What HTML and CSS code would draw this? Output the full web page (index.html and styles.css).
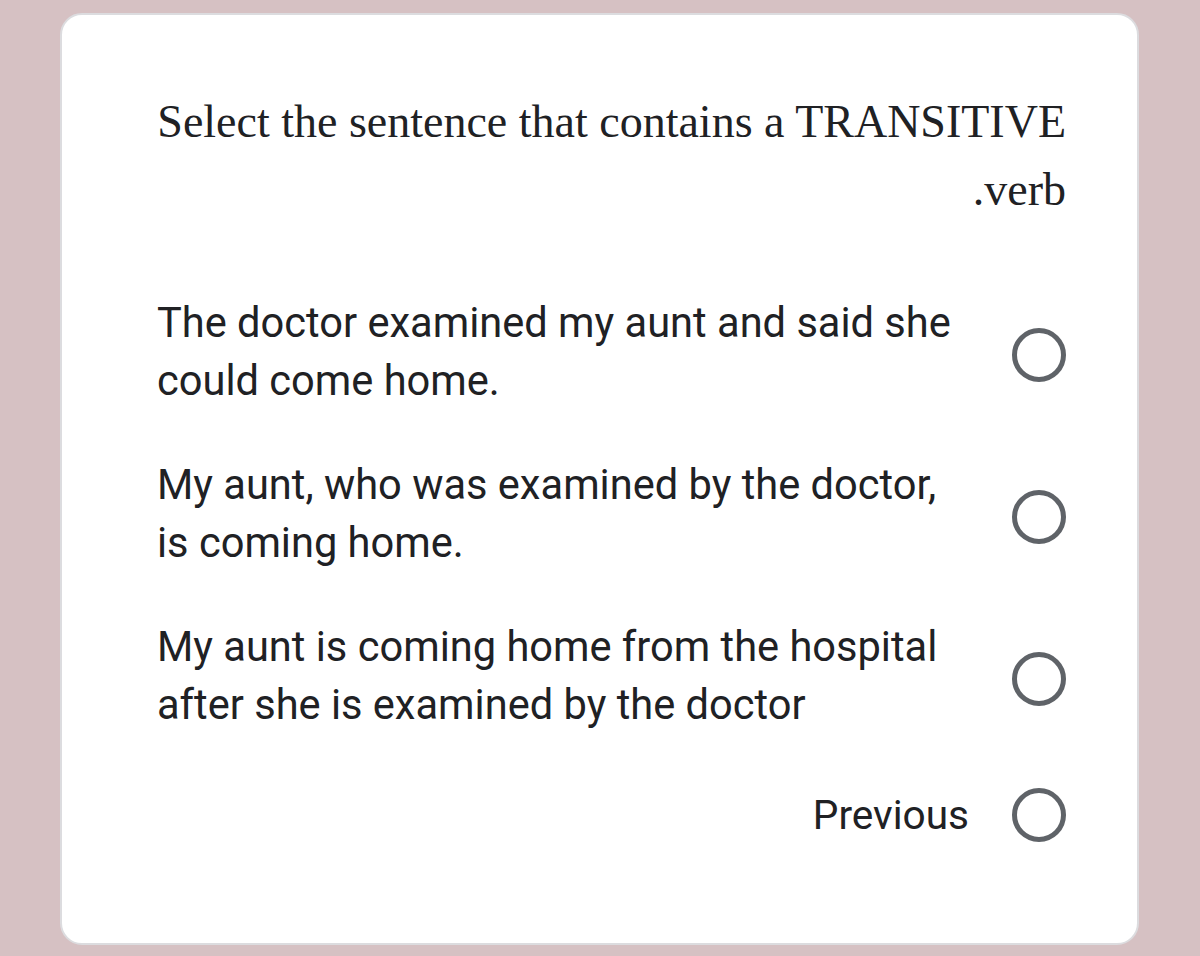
FILE: index.html
```html
<!DOCTYPE html>
<html lang="en">
<head>
<meta charset="utf-8">
<title>Quiz</title>
<link rel="stylesheet" href="styles.css">
</head>
<body>
<div class="card">
  <h1 class="question" dir="rtl">Select the sentence that contains a TRANSITIVE verb.</h1>
  <div class="options">
    <label class="option">
      <span class="option-text">The doctor examined my aunt and said she could come home.</span>
      <span class="radio"></span>
    </label>
    <label class="option">
      <span class="option-text">My aunt, who was examined by the doctor, is coming home.</span>
      <span class="radio"></span>
    </label>
    <label class="option">
      <span class="option-text">My aunt is coming home from the hospital after she is examined by the doctor</span>
      <span class="radio"></span>
    </label>
  </div>
  <div class="previous">
    <span class="previous-text">Previous</span>
    <span class="radio"></span>
  </div>
</div>
</body>
</html>
```

FILE: styles.css
```css
html, body {
  margin: 0;
  padding: 0;
}
body {
  background: #d6c1c3;
  width: 1200px;
  height: 956px;
  overflow: hidden;
  padding-top: 13px;
  box-sizing: border-box;
}
.card {
  margin-left: 60px;
  width: 1079px;
  height: 932px;
  box-sizing: border-box;
  background: #ffffff;
  border: 2px solid #dcdcdf;
  border-radius: 22px;
  padding: 73px 71px 0 95px;
}
.question {
  margin: 0;
  font-family: "Liberation Serif", "DejaVu Serif", serif;
  font-weight: normal;
  font-size: 46px;
  line-height: 68px;
  color: #202124;
  text-align: right;
}
.options {
  display: flex;
  flex-direction: column;
  gap: 46px;
  margin-top: 70px;
}
.option {
  display: flex;
  justify-content: space-between;
  align-items: center;
}
.option-text {
  width: 805px;
  font-family: Roboto, "Noto Sans", sans-serif;
  font-size: 41.6px;
  line-height: 58px;
  color: #202124;
}
.radio {
  flex: none;
  width: 54px;
  height: 54px;
  box-sizing: border-box;
  border: 5px solid #5f6368;
  border-radius: 50%;
}
.option .radio {
  margin-top: 6px;
}
.previous {
  display: flex;
  justify-content: flex-end;
  align-items: center;
  gap: 43px;
  margin-top: 52px;
}
.previous-text {
  font-family: Roboto, "Noto Sans", sans-serif;
  font-size: 40.6px;
  line-height: 58px;
  color: #202124;
}
```
